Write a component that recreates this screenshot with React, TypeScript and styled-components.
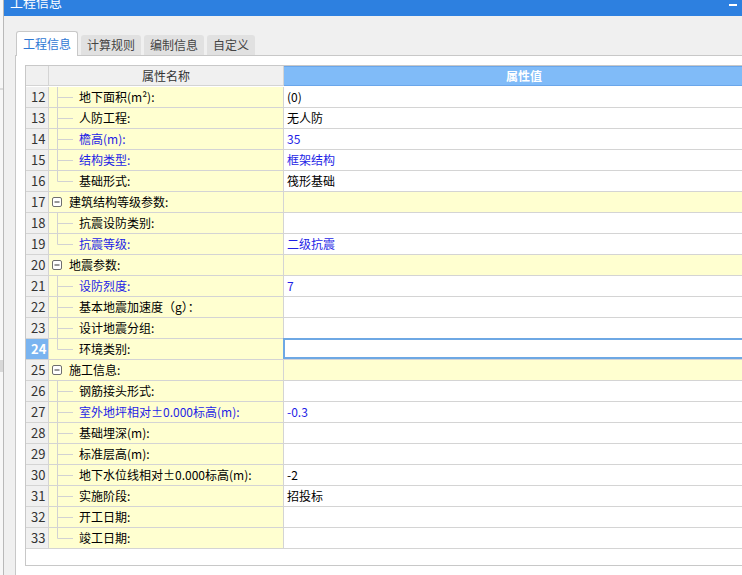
import React from "react";
import styled, { createGlobalStyle, css } from "styled-components";

const GlobalStyle = createGlobalStyle`
  html, body {
    margin: 0;
    padding: 0;
    width: 742px;
    height: 575px;
    overflow: hidden;
    background: #f0f0f0;
  }
  body {
    font-family: "Microsoft YaHei", "Noto Sans CJK SC", "Noto Sans", sans-serif;
    font-size: 12px;
    color: #000;
  }
  * {
    box-sizing: border-box;
  }
`;

type RowKind = "child" | "last" | "group";

interface PropRow {
  n: number;
  label: string;
  value?: string;
  kind: RowKind;
  blue?: boolean;
  selected?: boolean;
}

const rows: PropRow[] = [
  { n: 12, label: "地下面积(m²):", value: "(0)", kind: "child" },
  { n: 13, label: "人防工程:", value: "无人防", kind: "child" },
  { n: 14, label: "檐高(m):", value: "35", kind: "child", blue: true },
  { n: 15, label: "结构类型:", value: "框架结构", kind: "child", blue: true },
  { n: 16, label: "基础形式:", value: "筏形基础", kind: "last" },
  { n: 17, label: "建筑结构等级参数:", kind: "group" },
  { n: 18, label: "抗震设防类别:", kind: "child" },
  { n: 19, label: "抗震等级:", value: "二级抗震", kind: "last", blue: true },
  { n: 20, label: "地震参数:", kind: "group" },
  { n: 21, label: "设防烈度:", value: "7", kind: "child", blue: true },
  { n: 22, label: "基本地震加速度（g）：", kind: "child" },
  { n: 23, label: "设计地震分组:", kind: "child" },
  { n: 24, label: "环境类别:", kind: "last", selected: true },
  { n: 25, label: "施工信息:", kind: "group" },
  { n: 26, label: "钢筋接头形式:", kind: "child" },
  { n: 27, label: "室外地坪相对±0.000标高(m):", value: "-0.3", kind: "child", blue: true },
  { n: 28, label: "基础埋深(m):", kind: "child" },
  { n: 29, label: "标准层高(m):", kind: "child" },
  { n: 30, label: "地下水位线相对±0.000标高(m):", value: "-2", kind: "child" },
  { n: 31, label: "实施阶段:", value: "招投标", kind: "child" },
  { n: 32, label: "开工日期:", kind: "child" },
  { n: 33, label: "竣工日期:", kind: "last" },
];

const tabs = ["工程信息", "计算规则", "编制信息", "自定义"];

const Screen = styled.div`
  width: 742px;
  height: 575px;
  display: flex;
  overflow: hidden;
`;

const BackStrip = styled.div`
  width: 3px;
  flex: none;
  background: linear-gradient(
    #f7f7f7 0 88px,
    #dcdcdc 88px 90px,
    #f7f7f7 90px 360px,
    #d8d8d8 360px 372px,
    #f7f7f7 372px
  );
`;

const Dialog = styled.div`
  flex: 1;
  min-width: 0;
  display: flex;
  flex-direction: column;
  border-left: 1px solid #b9b9b9;
`;

const TitleBar = styled.div`
  height: 16px;
  flex: none;
  background: #2d80e0;
  display: flex;
  justify-content: space-between;
  align-items: flex-start;
  padding: 0 5px 0 6px;
  overflow: hidden;
`;

const TitleText = styled.span`
  color: #fff;
  font-size: 13px;
  line-height: 13px;
  margin-top: -5px;
`;

const MinButton = styled.span`
  width: 8px;
  height: 2px;
  margin-top: 4px;
  background: #fff;
`;

const Body = styled.div`
  flex: 1;
  display: flex;
  flex-direction: column;
  padding: 15px 0 0 11px;
  background: #f0f0f0;
`;

const TabStrip = styled.div`
  height: 24px;
  display: flex;
  align-items: flex-end;
  gap: 3px;
  padding-left: 1px;
  position: relative;
  z-index: 1;
`;

const Tab = styled.div<{ $active?: boolean }>`
  height: 20px;
  padding: 0 6px;
  line-height: 19px;
  font-size: 12px;
  color: #444;
  background: #e1e1e1;
  border-radius: 3px 3px 0 0;
  ${(p) =>
    p.$active &&
    css`
      height: 25px;
      line-height: 24px;
      margin-bottom: -1px;
      color: #2f78d4;
      background: #fff;
      border: 1px solid #c8c8c8;
      border-bottom: none;
    `}
`;

const Pane = styled.div`
  flex: 1;
  background: #fff;
  border-top: 1px solid #c8c8c8;
  border-left: 1px solid #c8c8c8;
  padding: 9px 0 0 9px;
`;

const Grid = styled.div`
  width: 739px;
  height: 501px;
  background: #fff;
  border: 1px solid #c8c8c8;
  border-right: none;
`;

const GridRow = styled.div`
  display: grid;
  grid-template-columns: 23px 235px 480px;
  height: 21px;
`;

const HeadCell = styled.div<{ $accent?: boolean }>`
  height: 20px;
  line-height: 19px;
  text-align: center;
  color: #333;
  background: #f0f0f0;
  border-right: 1px solid #d4d4d4;
  border-bottom: 1px solid #d4d4d4;
  ${(p) =>
    p.$accent &&
    css`
      color: #fff;
      font-weight: bold;
      background: #80bbf8;
      border: none;
      border-bottom: 1px solid #6aa6ea;
      box-shadow: inset 0 1px 0 #6aa6ea;
    `}
`;

const NumCell = styled.div<{ $selected?: boolean }>`
  padding-left: 5px;
  line-height: 20px;
  font-size: 13px;
  color: #333;
  background: #f0f0f0;
  border-right: 1px solid #d4d4d4;
  border-bottom: 1px solid #d4d4d4;
  ${(p) =>
    p.$selected &&
    css`
      color: #fff;
      font-weight: bold;
      background: #7ab4f0;
    `}
`;

const NameCell = styled.div<{ $blue?: boolean }>`
  display: flex;
  align-items: center;
  line-height: 20px;
  white-space: nowrap;
  color: ${(p) => (p.$blue ? "#1e1ee6" : "#000")};
  background: #ffffd0;
  border-right: 1px solid #d4d4d4;
  border-bottom: 1px solid #d4d4d4;
  svg {
    flex: none;
    display: block;
  }
`;

const ValueCell = styled.div<{ $blue?: boolean; $group?: boolean; $selected?: boolean }>`
  padding-left: 3px;
  line-height: 20px;
  white-space: nowrap;
  color: ${(p) => (p.$blue ? "#1e1ee6" : "#000")};
  background: ${(p) => (p.$group ? "#ffffd0" : "#fff")};
  border-bottom: 1px solid #d4d4d4;
  ${(p) =>
    p.$selected &&
    css`
      margin: -1px 0 0 -1px;
      box-shadow: inset 0 0 0 2px #6ea8e4;
    `}
`;

const TreeGuide = ({ last }: { last: boolean }) => (
  <svg width="30" height="20" viewBox="0 0 30 20">
    <line x1="8.5" y1="0" x2="8.5" y2={last ? 10.5 : 20} stroke="#d2d2d2" />
    <line x1="8.5" y1="10.5" x2="24" y2="10.5" stroke="#d2d2d2" />
  </svg>
);

const Collapse = () => (
  <svg width="20" height="20" viewBox="0 0 20 20">
    <rect x="3.5" y="5.5" width="9" height="9" rx="1.5" fill="#fff" stroke="#6e6e6e" />
    <line x1="5.5" y1="10" x2="10.5" y2="10" stroke="#333" />
  </svg>
);

const App = () => {
  return (
    <>
      <GlobalStyle />
      <Screen>
        <BackStrip />
        <Dialog>
          <TitleBar>
            <TitleText>工程信息</TitleText>
            <MinButton />
          </TitleBar>
          <Body>
            <TabStrip>
              {tabs.map((t, i) => (
                <Tab key={t} $active={i === 0}>
                  {t}
                </Tab>
              ))}
            </TabStrip>
            <Pane>
              <Grid>
                <GridRow>
                  <HeadCell />
                  <HeadCell>属性名称</HeadCell>
                  <HeadCell $accent>属性值</HeadCell>
                </GridRow>
                {rows.map((r) => (
                  <GridRow key={r.n}>
                    <NumCell $selected={r.selected}>{r.n}</NumCell>
                    <NameCell $blue={r.blue}>
                      {r.kind === "group" ? <Collapse /> : <TreeGuide last={r.kind === "last"} />}
                      {r.label}
                    </NameCell>
                    <ValueCell $blue={r.blue} $group={r.kind === "group"} $selected={r.selected}>
                      {r.value}
                    </ValueCell>
                  </GridRow>
                ))}
              </Grid>
            </Pane>
          </Body>
        </Dialog>
      </Screen>
    </>
  );
};

export default App;
